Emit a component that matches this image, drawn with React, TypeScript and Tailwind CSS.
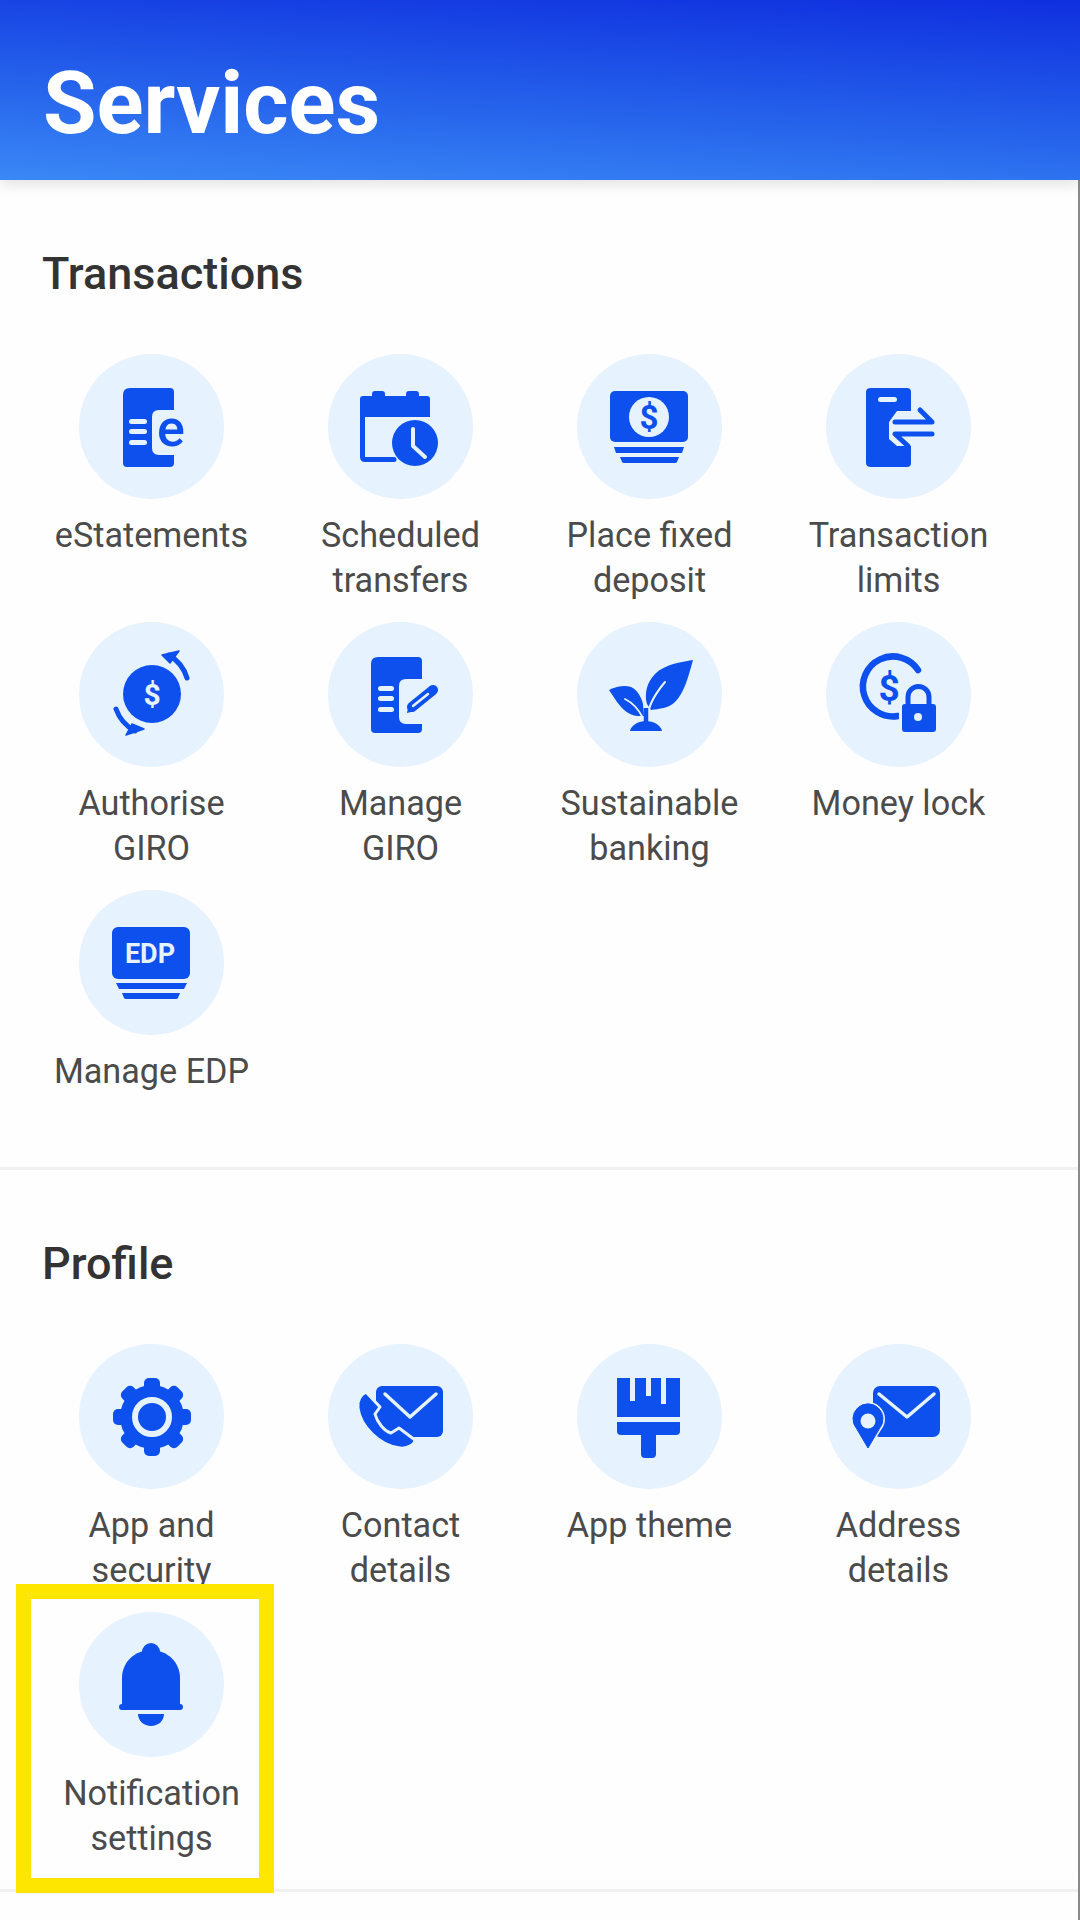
import React from "react";

const B = "#0d50ee";
const L = "#e6f2fd";

function Dollar({ x, y, size, fill }: { x: number; y: number; size: number; fill: string }) {
  return (
    <text x={x} y={y} fontSize={size} fontWeight={700} fontFamily="Roboto, sans-serif" fill={fill} textAnchor="middle">
      $
    </text>
  );
}

const docPath = (l: number, t: number, r: number, b: number, cx: number, ct: number, cb: number) =>
  `M${l + 7} ${t}H${r - 4}Q${r} ${t} ${r} ${t + 4}V${ct}H${cx + 7}Q${cx} ${ct} ${cx} ${ct + 7}V${cb - 7}Q${cx} ${cb} ${cx + 7} ${cb}H${r}V${b - 4}Q${r} ${b} ${r - 4} ${b}H${l + 4}Q${l} ${b} ${l} ${b - 4}V${t + 7}Q${l} ${t} ${l + 7} ${t}Z`;

const icons: Record<string, React.ReactNode> = {
  estatements: (
    <>
      <path d={docPath(44, 34, 95, 113, 73, 56, 101)} fill={B} />
      <rect x="50" y="65" width="18" height="5" rx="2.5" fill={L} />
      <rect x="50" y="75" width="18" height="5" rx="2.5" fill={L} />
      <rect x="50" y="86" width="18" height="5" rx="2.5" fill={L} />
      <text x="92" y="92" fontSize="52" fontWeight={500} fontFamily="Roboto, sans-serif" fill={B} textAnchor="middle">e</text>
    </>
  ),
  scheduled: (
    <>
      <rect x="44" y="37" width="13" height="10" rx="3" fill={B} />
      <rect x="78" y="37" width="13" height="10" rx="3" fill={B} />
      <path d="M35 42H99Q102 42 102 45V63H32V45Q32 42 35 42Z" fill={B} />
      <path d="M34.5 60V103Q34.5 105.5 37 105.5H66" fill="none" stroke={B} strokeWidth="5" strokeLinecap="round" />
      <circle cx="87" cy="89" r="23" fill={B} />
      <path d="M85 75V92L97 103" fill="none" stroke={L} strokeWidth="4" strokeLinecap="round" strokeLinejoin="round" />
    </>
  ),
  deposit: (
    <>
      <rect x="33" y="37" width="78" height="51" rx="5" fill={B} />
      <circle cx="72" cy="63" r="20" fill={L} />
      <Dollar x={72} y={75} size={33} fill={B} />
      <path d="M37 93H107L105 99H39Z" fill={B} />
      <path d="M43 103H102L100 108Q99.5 109 98 109H47Q45.5 109 45 108Z" fill={B} />
    </>
  ),
  limits: (
    <>
      <path d="M45 34H81Q85 34 85 38V57H71L63 68V85L71 92H85V109Q85 113 81 113H45Q40 113 40 109V38Q40 34 45 34Z" fill={B} />
      <rect x="52" y="43" width="19" height="5" rx="2.5" fill={L} />
      <path d="M69 68H106L94 56" fill="none" stroke={B} strokeWidth="5" strokeLinecap="round" strokeLinejoin="round" />
      <path d="M106 80H69L82 92" fill="none" stroke={B} strokeWidth="5" strokeLinecap="round" strokeLinejoin="round" />
    </>
  ),
  authorise: (
    <>
      <circle cx="73" cy="72" r="29" fill={B} />
      <Dollar x={73} y={83} size={30} fill={L} />
      <path d="M90 33A40 40 0 0 1 108 56" fill="none" stroke={B} strokeWidth="5" strokeLinecap="round" />
      <path d="M83 33L100 29L91 41Z" fill={B} stroke={B} strokeWidth="1.5" strokeLinejoin="round" />
      <path d="M37 87A40 40 0 0 0 56 109" fill="none" stroke={B} strokeWidth="5" strokeLinecap="round" />
      <path d="M65 107L47 113L53 102Z" fill={B} stroke={B} strokeWidth="1.5" strokeLinejoin="round" />
    </>
  ),
  giro: (
    <>
      <path d={docPath(43, 35, 94, 111, 71, 57, 102)} fill={B} />
      <rect x="50" y="64" width="16" height="5" rx="2.5" fill={L} />
      <rect x="50" y="74" width="16" height="5" rx="2.5" fill={L} />
      <rect x="50" y="85" width="16" height="5" rx="2.5" fill={L} />
      <path d="M84 85L105 68" fill="none" stroke={B} strokeWidth="10" strokeLinecap="round" />
      <path d="M85 84L100 72" fill="none" stroke={L} strokeWidth="2.5" strokeLinecap="round" />
      <path d="M79 91L81 81L87 89Z" fill={B} />
    </>
  ),
  sustainable: (
    <>
      <path d="M116 38C104 40 88 42 78 52C70 60 67 72 70 82L74 88C82 87 92 86 98 80C108 70 112 52 116 38Z" fill={B} />
      <path d="M32 68C40 64 48 63 54 65C60 68 64 74 66 82L67 94L60 94C52 93 46 88 40 80Z" fill={B} />
      <path d="M71 92C72 84 78 72 88 60" fill="none" stroke={L} strokeWidth="2" strokeLinecap="round" />
      <path d="M48 77C56 81 62 88 66 96" fill="none" stroke={L} strokeWidth="1.8" strokeLinecap="round" />
      <path d="M69 86V102" stroke={B} strokeWidth="4.5" />
      <path d="M53 109C54 103 62 99 69 99C76 99 84 103 85 109Z" fill={B} />
    </>
  ),
  lock: (
    <>
      <path d="M92 48A30 30 0 1 0 72 94" fill="none" stroke={B} strokeWidth="6.5" strokeLinecap="round" />
      <Dollar x={63} y={79} size={37} fill={B} />
      <rect x="73" y="58" width="41" height="56" rx="8" fill={L} />
      <path d="M82 84V75A10.5 10.5 0 0 1 103 75V84" fill="none" stroke={B} strokeWidth="5" />
      <rect x="76" y="82" width="34" height="28" rx="3" fill={B} />
      <circle cx="92" cy="95" r="4" fill={L} />
    </>
  ),
  edp: (
    <>
      <rect x="33" y="37" width="78" height="52" rx="6" fill={B} />
      <text x="71" y="73" fontSize="27" fontWeight={700} fontFamily="Roboto, sans-serif" fill={L} textAnchor="middle">EDP</text>
      <path d="M37 93H108L105 99H40Z" fill={B} />
      <path d="M43 103H101L99 108Q98.5 109 97 109H47Q45.5 109 45 108Z" fill={B} />
    </>
  ),
  gear: (
    <>
      {[0, 45, 90, 135, 180, 225, 270, 315].map((a) => (
        <rect key={a} x="65" y="34" width="16" height="14" rx="5" fill={B} transform={`rotate(${a} 73 73)`} />
      ))}
      <circle cx="73" cy="73" r="32" fill={B} />
      <circle cx="73" cy="73" r="17" fill={B} stroke={L} strokeWidth="6" />
    </>
  ),
  contact: (
    <>
      <rect x="48" y="42" width="67" height="51" rx="6" fill={B} />
      <path d="M57 50L82 73L108 50" fill="none" stroke={L} strokeWidth="3.5" strokeLinecap="round" strokeLinejoin="round" />
      <path d="M38 48C33 50 29 56 30 64C32 82 52 102 72 104C80 105 87 100 87 96L71 84L63 89C56 87 49 78 47 70L52 63Z" fill={B} stroke={L} strokeWidth="3" strokeLinejoin="round" />
    </>
  ),
  theme: (
    <>
      <path d="M40 34H53V57H58V34H69V52H74V34H84V60H89V34H103V73H40Z" fill={B} />
      <path d="M40 78H103V87Q103 91 99 91H44Q40 91 40 87Z" fill={B} />
      <path d="M64 91H79V110Q79 114 75 114H68Q64 114 64 110Z" fill={B} />
    </>
  ),
  address: (
    <>
      <rect x="47" y="42" width="67" height="51" rx="7" fill={B} />
      <path d="M53 50L81 73L108 50" fill="none" stroke={L} strokeWidth="3.5" strokeLinecap="round" strokeLinejoin="round" />
      <path d="M42 107L29 86A17 17 0 1 1 55 86Z" fill={L} />
      <path d="M42 104L30.5 84.5A15 15 0 1 1 53.5 84.5Z" fill={B} stroke={B} strokeWidth="1" strokeLinejoin="round" />
      <circle cx="42" cy="77" r="7.5" fill={L} />
    </>
  ),
  bell: (
    <>
      <circle cx="72" cy="40" r="9" fill={B} />
      <path d="M43 93V66C43 50 56 38 72 38C88 38 101 50 101 66V93Z" fill={B} />
      <rect x="40" y="92" width="64" height="6" rx="3" fill={B} />
      <path d="M59 102H85C85 109 79 114 72 114C65 114 59 109 59 102Z" fill={B} />
    </>
  ),
};

type Item = { icon: string; label: string[] };

const transactions: Item[] = [
  { icon: "estatements", label: ["eStatements"] },
  { icon: "scheduled", label: ["Scheduled", "transfers"] },
  { icon: "deposit", label: ["Place fixed", "deposit"] },
  { icon: "limits", label: ["Transaction", "limits"] },
  { icon: "authorise", label: ["Authorise", "GIRO"] },
  { icon: "giro", label: ["Manage", "GIRO"] },
  { icon: "sustainable", label: ["Sustainable", "banking"] },
  { icon: "lock", label: ["Money lock"] },
  { icon: "edp", label: ["Manage EDP"] },
];

const profile: Item[] = [
  { icon: "gear", label: ["App and", "security"] },
  { icon: "contact", label: ["Contact", "details"] },
  { icon: "theme", label: ["App theme"] },
  { icon: "address", label: ["Address", "details"] },
  { icon: "bell", label: ["Notification", "settings"] },
];

function Service({ item }: { item: Item }) {
  return (
    <div className="flex flex-col items-center">
      <div className="w-[145px] h-[145px] rounded-full bg-[#e6f2fd] shrink-0">
        <svg width="145" height="145" viewBox="0 0 145 145">
          {icons[item.icon]}
        </svg>
      </div>
      <div className="mt-[14px] text-center text-[34.2px] leading-[45px] text-[#4b4b4b]">
        {item.label.map((l) => (
          <div key={l} className="whitespace-nowrap">{l}</div>
        ))}
      </div>
    </div>
  );
}

function Section({ title, items }: { title: string; items: Item[] }) {
  return (
    <section className="pt-[70px] pb-[27px]">
      <h2 className="pl-[42px] text-[45px] leading-[48px] font-medium text-[#333333]">{title}</h2>
      <div className="mt-[56px] pl-[27px] grid grid-cols-[repeat(4,249px)] auto-rows-[250px] gap-y-[18px]">
        {items.map((i) => (
          <Service key={i.icon} item={i} />
        ))}
      </div>
    </section>
  );
}

export default function App() {
  return (
    <div className="relative w-[1080px] h-[1920px] overflow-hidden bg-[#fefefe] font-['Roboto',sans-serif]">
      <header className="relative z-10 h-[180px] pl-[43px] flex items-center bg-[linear-gradient(183deg,#0f2fdf_0%,#2766ec_62%,#3a88f6_100%)] shadow-[0_4px_14px_rgba(0,0,0,0.12)]">
        <h1 className="pt-[26px] text-[87px] leading-[100px] font-bold text-white">Services</h1>
      </header>
      <main className="border-r-2 border-[#8a8a8a] h-[1740px]">
        <Section title="Transactions" items={transactions} />
        <div className="h-[3px] bg-[#f1f1f1]" />
        <Section title="Profile" items={profile} />
        <div className="h-[3px] bg-[#f1f1f1] shadow-[0_-6px_10px_rgba(0,0,0,0.03)]" />
      </main>
      <div className="absolute left-[16px] top-[1584px] w-[258px] h-[309px] border-[15px] border-[#ffe600]" />
    </div>
  );
}
